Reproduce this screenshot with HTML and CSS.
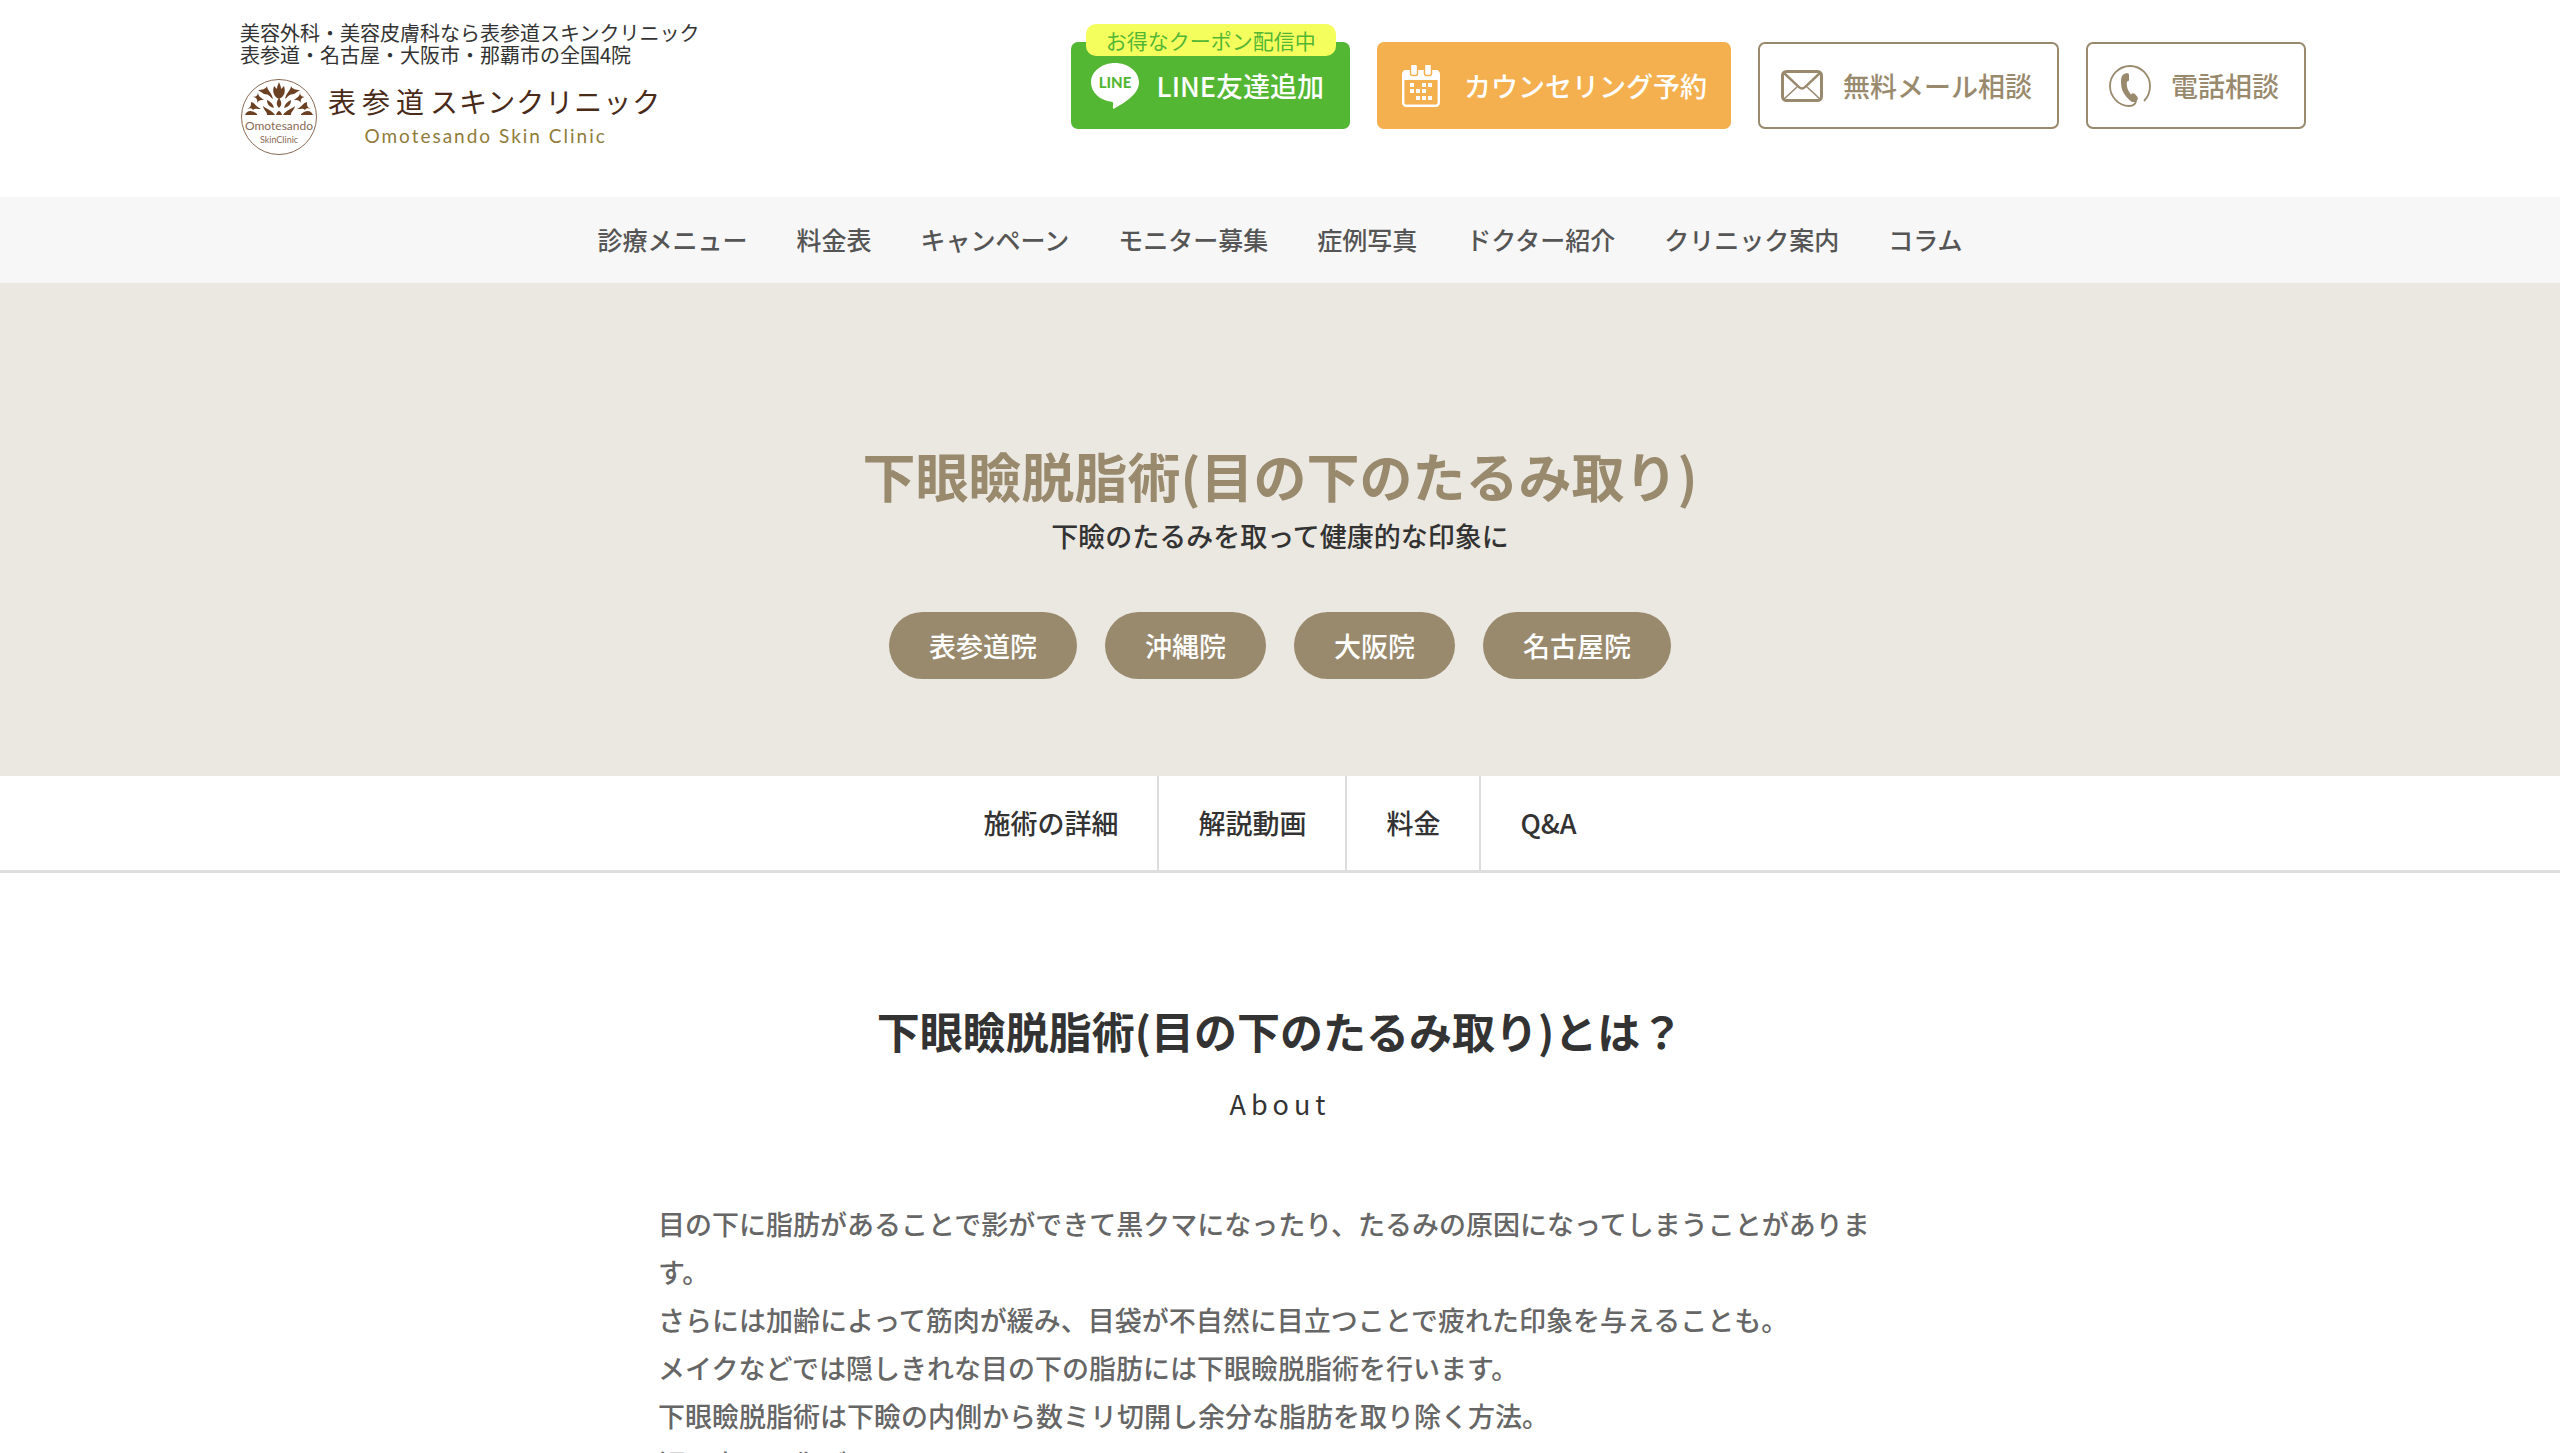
FILE: index.html
```html
<!DOCTYPE html>
<html lang="ja">
<head>
    <meta charset="UTF-8">
    <meta name="viewport" content="width=device-width, initial-scale=1.0">
    <title>下眼瞼脱脂術(目の下のたるみ取り) | 表参道スキンクリニック</title>
    <link rel="stylesheet" href="styles.css">
</head>
<body>
    <header class="header">
        <div class="brand">
            <p class="tagline">美容外科・美容皮膚科なら表参道スキンクリニック<br>表参道・名古屋・大阪市・那覇市の全国4院</p>
            <a class="logo" href="#">
                <svg class="logo-mark" viewBox="0 0 78 78" aria-hidden="true">
                    <circle cx="39" cy="39" r="37.5" fill="none" stroke="#8a6a55" stroke-width="1"/>
                    <g fill="#6b4023">
                        <path d="M39 4c1 3 2 4 2 7l3-3c2 6 0 11-5 13c-5-2-7-7-5-13l3 3c0-3 1-4 2-7z"/>
                        <path d="M39 20c3 4 3 7 0 10c-3-3-3-6 0-10z"/>
                        <path d="M27 8c0 4 5 7 6 13c-3-2-4-5-9-5l-6-4c4 0 8-1 9-4z"/>
                        <path d="M18 14c0 4 2 5 6 8c-4 0-5 0-7 3c1-4-1-6-5-6c4 0 6-1 6-5z"/>
                        <path d="M27 22c4 2 6 4 7 8c-4-1-7-3-7-8z"/>
                        <path d="M11 24c4 1 4 4 10 7c-5 0-6-1-8 1c-1-2-3-2-6-1c4-2 4-3 4-7z"/>
                        <path d="M5 37c2-5 7-5 12-1v1z"/>
                        <path d="M23 28c3 3 9 4 12 9h-8c0-4-3-4-4-9z"/>
                        <path d="M51 8c0 4-5 7-6 13c3-2 4-5 9-5l6-4c-4 0-8-1-9-4z"/>
                        <path d="M60 14c0 4-2 5-6 8c4 0 5 0 7 3c-1-4 1-6 5-6c-4 0-6-1-6-5z"/>
                        <path d="M51 22c-4 2-6 4-7 8c4-1 7-3 7-8z"/>
                        <path d="M67 24c-4 1-4 4-10 7c5 0 6-1 8 1c1-2 3-2 6-1c-4-2-4-3-4-7z"/>
                        <path d="M73 37c-2-5-7-5-12-1v1z"/>
                        <path d="M55 28c-3 3-9 4-12 9h8c0-4 3-4 4-9z"/>
                        <path d="M36 37c1-3 2-4 3-4s2 1 3 4z"/>
                    </g>
                    <text class="mark-text" x="39" y="52" font-size="12">Omotesando</text>
                    <text class="mark-text" x="39" y="65" font-size="9">SkinClinic</text>
                </svg>
                <span class="logo-text">
                    <span class="logo-ja"><span class="logo-kanji">表参道</span>スキンクリニック</span>
                    <span class="logo-en">Omotesando Skin Clinic</span>
                </span>
            </a>
        </div>
        <div class="contact">
            <a class="btn btn-line" href="#">
                <span class="coupon">お得なクーポン配信中</span>
                <svg width="48" height="48" viewBox="0 0 48 48" aria-hidden="true">
                    <path fill="#fff" d="M24 1C10.700 1 0 9.500 0 20.500c0 9.800 8.800 18 20.600 19.300c2 .4 1.700 1.600 1.300 5.500c-.1 1.500.7 1.700 2 .9C31 42 48 33 48 20.500C48 9.500 37.300 1 24 1z"/>
                    <text class="line-text" x="24" y="26">LINE</text>
                </svg>
                LINE友達追加
            </a>
            <a class="btn btn-reserve" href="#">
                <svg width="38" height="42" viewBox="0 0 38 42" aria-hidden="true">
                    <rect x="1.200" y="6.200" width="35.600" height="34.500" rx="3" fill="none" stroke="#fff" stroke-width="2.400"/>
                    <path fill="#fff" d="M1 15V8q0-3 3-3h30q3 0 3 3v7z"/>
                    <g fill="#fff" stroke="#f4b04f" stroke-width="1.400">
                        <rect x="8.500" y="-1" width="7" height="11.500" rx="2"/>
                        <rect x="22.500" y="-1" width="7" height="11.500" rx="2"/>
                    </g>
                    <path fill="#fff" d="M8 18h4v4H8zM20 18h4v4h-4zM26 18h4v4h-4zM8 24h4v4H8zM14 24h4v4h-4zM20 24h4v4h-4zM14 31h4v4h-4zM20 31h4v4h-4zM26 31h4v4h-4z"/>
                </svg>
                カウンセリング予約
            </a>
            <a class="btn btn-outline btn-mail" href="#">
                <svg width="42" height="32" viewBox="0 0 42 32" fill="none" stroke="#998a6e" aria-hidden="true">
                    <rect x="1.500" y="1.500" width="39" height="29" rx="4" stroke-width="3"/>
                    <path d="M3 3l15 14q3 3 6 0L39 3" stroke-width="2.400"/>
                    <path d="M3 29l13-12M39 29L26 17" stroke-width="1.600"/>
                </svg>
                無料メール相談
            </a>
            <a class="btn btn-outline btn-tel" href="#">
                <svg width="42" height="42" viewBox="0 0 42 42" aria-hidden="true">
                    <path fill="none" stroke="#998a6e" stroke-width="1.800" d="M35 36C39 32 41 27 41 21C41 10 32 1 21 1S1 10 1 21c0 11 9 20 19 20c5 0 7-2 7-6"/>
                    <path fill="#998a6e" d="M15 9l3-1q2 0 2 2v5q0 1-2 1.500c-1 5 1 9 4 13q2-2 4-.5l2.500 3q1 2-.5 3.500c-2 2-5 2-7 0C15 30 12 25 12 17c0-4 .5-6.500 3-8z"/>
                </svg>
                電話相談
            </a>
        </div>
    </header>

    <nav class="global-nav">
        <a href="#">診療メニュー</a>
        <a href="#">料金表</a>
        <a href="#">キャンペーン</a>
        <a href="#">モニター募集</a>
        <a href="#">症例写真</a>
        <a href="#">ドクター紹介</a>
        <a href="#">クリニック案内</a>
        <a href="#">コラム</a>
    </nav>

    <main>
        <section class="hero">
            <h1>下眼瞼脱脂術(目の下のたるみ取り)</h1>
            <p>下瞼のたるみを取って健康的な印象に</p>
            <div class="clinics">
                <a href="#">表参道院</a>
                <a href="#">沖縄院</a>
                <a href="#">大阪院</a>
                <a href="#">名古屋院</a>
            </div>
        </section>

        <nav class="page-nav">
            <a href="#about">施術の詳細</a>
            <a href="#movie">解説動画</a>
            <a href="#price">料金</a>
            <a href="#qa">Q&amp;A</a>
        </nav>

        <section class="about" id="about">
            <h2>下眼瞼脱脂術(目の下のたるみ取り)とは？</h2>
            <p class="sub">About</p>
            <p class="text">
                目の下に脂肪があることで影ができて黒クマになったり、たるみの原因になってしまうことがあります。<br>
                さらには加齢によって筋肉が緩み、目袋が不自然に目立つことで疲れた印象を与えることも。<br>
                メイクなどでは隠しきれな目の下の脂肪には下眼瞼脱脂術を行います。<br>
                下眼瞼脱脂術は下瞼の内側から数ミリ切開し余分な脂肪を取り除く方法。<br>
                短い方では傷が
            </p>
        </section>
    </main>
</body>
</html>
```
FILE: styles.css
```css
* {
    box-sizing: border-box;
}

body {
    margin: 0;
    background: #fff;
    color: #333;
    font-family: "Noto Sans CJK JP", "Noto Sans", sans-serif;
    font-size: 27px;
    font-weight: 500;
    line-height: 48px;
    overflow-x: hidden;
}

h1, h2, p {
    margin: 0;
}

a {
    color: inherit;
    text-decoration: none;
}

/* header */
.header {
    display: flex;
    justify-content: space-between;
    align-items: flex-start;
    min-height: 197px;
    padding: 22px 254px 24px 240px;
}

.tagline {
    font-size: 20px;
    font-weight: 400;
    line-height: 22px;
}

.logo {
    display: flex;
    align-items: center;
    gap: 10px;
    margin-top: 12px;
}

.logo-mark {
    width: 78px;
    height: 78px;
}

.mark-text {
    fill: #8a6a55;
    font-family: Lato, sans-serif;
    font-weight: 400;
    text-anchor: middle;
}

.logo-text {
    display: flex;
    flex-direction: column;
    align-items: center;
}

.logo-ja {
    color: #4a2a18;
    font-size: 28px;
    font-weight: 400;
    line-height: 38px;
    letter-spacing: 1px;
    white-space: nowrap;
}

.logo-kanji {
    letter-spacing: 6px;
}

.logo-en {
    padding-right: 18px;
    color: #8f7b3a;
    font-family: Lato, sans-serif;
    font-size: 19px;
    font-weight: 400;
    line-height: 32px;
    letter-spacing: 2px;
}

.contact {
    display: flex;
    gap: 27px;
    padding-top: 20px;
}

.btn {
    position: relative;
    display: flex;
    align-items: center;
    height: 87px;
    border-radius: 7px;
    white-space: nowrap;
}

.btn-line {
    gap: 18px;
    padding: 0 26px 0 20px;
    background: #54b733;
    color: #fff;
}

.btn-reserve {
    gap: 24px;
    padding: 0 24px 0 25px;
    background: #f4b04f;
    color: #fff;
}

.btn-outline {
    gap: 20px;
    padding: 0 25px 0 21px;
    border: 2px solid #998a6e;
    color: #998a6e;
}

.coupon {
    position: absolute;
    top: -18px;
    left: 15px;
    right: 14px;
    border-radius: 10px;
    background: #f4ff5e;
    color: #54b733;
    font-size: 21px;
    font-weight: 400;
    line-height: 32px;
    text-align: center;
}

.line-text {
    fill: #54b733;
    font-family: Lato, sans-serif;
    font-size: 15px;
    font-weight: 900;
    text-anchor: middle;
}

/* global navigation */
.global-nav {
    display: flex;
    justify-content: center;
    gap: 49px;
    padding: 18px 0 20px;
    background: #f7f7f7;
    color: #555;
    font-size: 25px;
}

/* hero */
.hero {
    padding: 155px 20px 97px;
    background: #ebe8e1;
    text-align: center;
}

.hero h1 {
    color: #998a6e;
    font-size: 53px;
    font-weight: 700;
    line-height: 74px;
}

.clinics {
    display: flex;
    justify-content: center;
    gap: 28px;
    margin-top: 52px;
}

.clinics a {
    padding: 10px 40px 9px;
    border-radius: 34px;
    background: #998a6e;
    color: #fff;
}

/* in-page navigation */
.page-nav {
    display: flex;
    justify-content: center;
    border-bottom: 3px solid #ddd;
}

.page-nav a {
    padding: 23px 39px;
}

.page-nav a + a {
    border-left: 2px solid #ddd;
}

/* about */
.about {
    max-width: 1244px;
    margin: 0 auto;
    padding: 125px 0 80px;
}

.about h2 {
    font-size: 43px;
    font-weight: 700;
    line-height: 64px;
    text-align: center;
}

.about .sub {
    margin-top: 18px;
    font-weight: 400;
    letter-spacing: 5px;
    text-align: center;
}

.about .text {
    margin-top: 72px;
    color: #666;
}
```
